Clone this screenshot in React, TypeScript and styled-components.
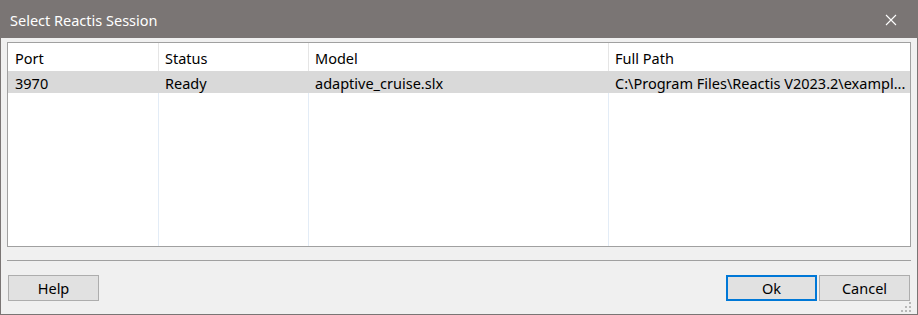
import React from 'react';
import styled, { createGlobalStyle } from 'styled-components';

interface ISession {
    port: string;
    status: string;
    model: string;
    path: string;
}

const sessions: ISession[] = [
    { port: '3970', status: 'Ready', model: 'adaptive_cruise.slx', path: 'C:\\Program Files\\Reactis V2023.2\\exampl...' },
];

const columns = [
    { key: 'port', title: 'Port', width: 150 },
    { key: 'status', title: 'Status', width: 150 },
    { key: 'model', title: 'Model', width: 300 },
    { key: 'path', title: 'Full Path', width: 302 },
];

const GlobalStyle = createGlobalStyle`
    body {
        margin: 0;
        background: #ffffff;
        font-family: "Segoe UI", "Noto Sans", "Open Sans", sans-serif;
    }
`;

const App = () => {
    return (
        <>
            <GlobalStyle />
            <Window>
                <TitleBar>
                    <Title>Select Reactis Session</Title>
                    <CloseButton aria-label="Close">
                        <svg width="12" height="12" viewBox="0 0 12 12">
                            <path d="M1 1 L11 11 M11 1 L1 11" stroke="#ffffff" strokeWidth="1.1" />
                        </svg>
                    </CloseButton>
                </TitleBar>
                <Body>
                    <ListPanel>
                        <HeaderRow>
                            {columns.map((c) => (
                                <HeaderCell key={c.key} $width={c.width}>{c.title}</HeaderCell>
                            ))}
                        </HeaderRow>
                        {sessions.map((s) => (
                            <DataRow key={s.port} $selected>
                                {columns.map((c) => (
                                    <Cell key={c.key} $width={c.width}>{s[c.key as keyof ISession]}</Cell>
                                ))}
                            </DataRow>
                        ))}
                        <Filler>
                            {columns.map((c) => (
                                <FillerColumn key={c.key} $width={c.width} />
                            ))}
                        </Filler>
                    </ListPanel>
                    <Divider />
                    <ButtonBar>
                        <DialogButton>Help</DialogButton>
                        <Spacer />
                        <DialogButton $default>Ok</DialogButton>
                        <DialogButton>Cancel</DialogButton>
                    </ButtonBar>
                </Body>
                <Grip width="12" height="10" viewBox="0 0 12 10">
                    <rect x="8" y="0" width="2" height="2" fill="#b8b8b8" />
                    <rect x="4" y="4" width="2" height="2" fill="#b8b8b8" />
                    <rect x="8" y="4" width="2" height="2" fill="#b8b8b8" />
                    <rect x="0" y="8" width="2" height="2" fill="#b8b8b8" />
                    <rect x="4" y="8" width="2" height="2" fill="#b8b8b8" />
                    <rect x="8" y="8" width="2" height="2" fill="#b8b8b8" />
                </Grip>
            </Window>
        </>
    );
};
export default App;

const Window = styled.div`
    position: relative;
    box-sizing: border-box;
    width: 918px;
    height: 315px;
    border: 1px solid #7a7574;
    background: #f0f0f0;
    display: flex;
    flex-direction: column;
    overflow: hidden;
`;
const TitleBar = styled.div`
    height: 37px;
    flex: none;
    background: #7a7574;
    display: flex;
    align-items: center;
    padding-left: 9px;
`;
const Title = styled.div`
    color: #ffffff;
    font-size: 14.5px;
    flex: 1;
`;
const CloseButton = styled.div`
    width: 46px;
    height: 37px;
    display: flex;
    align-items: center;
    justify-content: center;
    margin-right: 3px;
`;
const Body = styled.div`
    flex: 1;
    display: flex;
    flex-direction: column;
    padding: 4px 6px 0 6px;
`;
const ListPanel = styled.div`
    box-sizing: border-box;
    height: 205px;
    border: 1px solid #a0a0a0;
    background: #ffffff;
    display: flex;
    flex-direction: column;
    overflow: hidden;
`;
const HeaderRow = styled.div`
    display: flex;
    height: 28px;
    flex: none;
`;
const HeaderCell = styled.div<{ $width: number }>`
    box-sizing: border-box;
    width: ${(p) => p.$width}px;
    flex: none;
    padding: 1px 0 0 6px;
    font-size: 14.5px;
    color: #000000;
    display: flex;
    align-items: center;
    border-left: 1px solid #e5e5e5;
    &:first-child {
        border-left: none;
        padding-left: 7px;
    }
`;
const DataRow = styled.div<{ $selected?: boolean }>`
    display: flex;
    height: 22px;
    flex: none;
    background: ${(p) => (p.$selected ? '#d9d9d9' : 'transparent')};
`;
const Cell = styled.div<{ $width: number }>`
    box-sizing: border-box;
    width: ${(p) => p.$width}px;
    flex: none;
    padding: 1px 0 0 7px;
    font-size: 14.5px;
    color: #000000;
    display: flex;
    align-items: center;
    white-space: nowrap;
`;
const Filler = styled.div`
    flex: 1;
    display: flex;
`;
const FillerColumn = styled.div<{ $width: number }>`
    box-sizing: border-box;
    width: ${(p) => p.$width}px;
    flex: none;
    border-left: 1px solid #e3ecf6;
    &:first-child {
        border-left: none;
    }
`;
const Divider = styled.div`
    height: 1px;
    background: #a0a0a0;
    margin-top: 13px;
`;
const ButtonBar = styled.div`
    display: flex;
    gap: 2px;
    margin-top: 14px;
    padding-left: 1px;
    padding-right: 1px;
`;
const Spacer = styled.div`
    flex: 1;
`;
const DialogButton = styled.div<{ $default?: boolean }>`
    box-sizing: border-box;
    width: 91px;
    height: 26px;
    display: flex;
    align-items: center;
    justify-content: center;
    background: #e1e1e1;
    border: ${(p) => (p.$default ? '2px solid #0078d7' : '1px solid #adadad')};
    font-size: 14.5px;
    color: #000000;
`;
const Grip = styled.svg`
    position: absolute;
    right: 4px;
    bottom: 2px;
`;
